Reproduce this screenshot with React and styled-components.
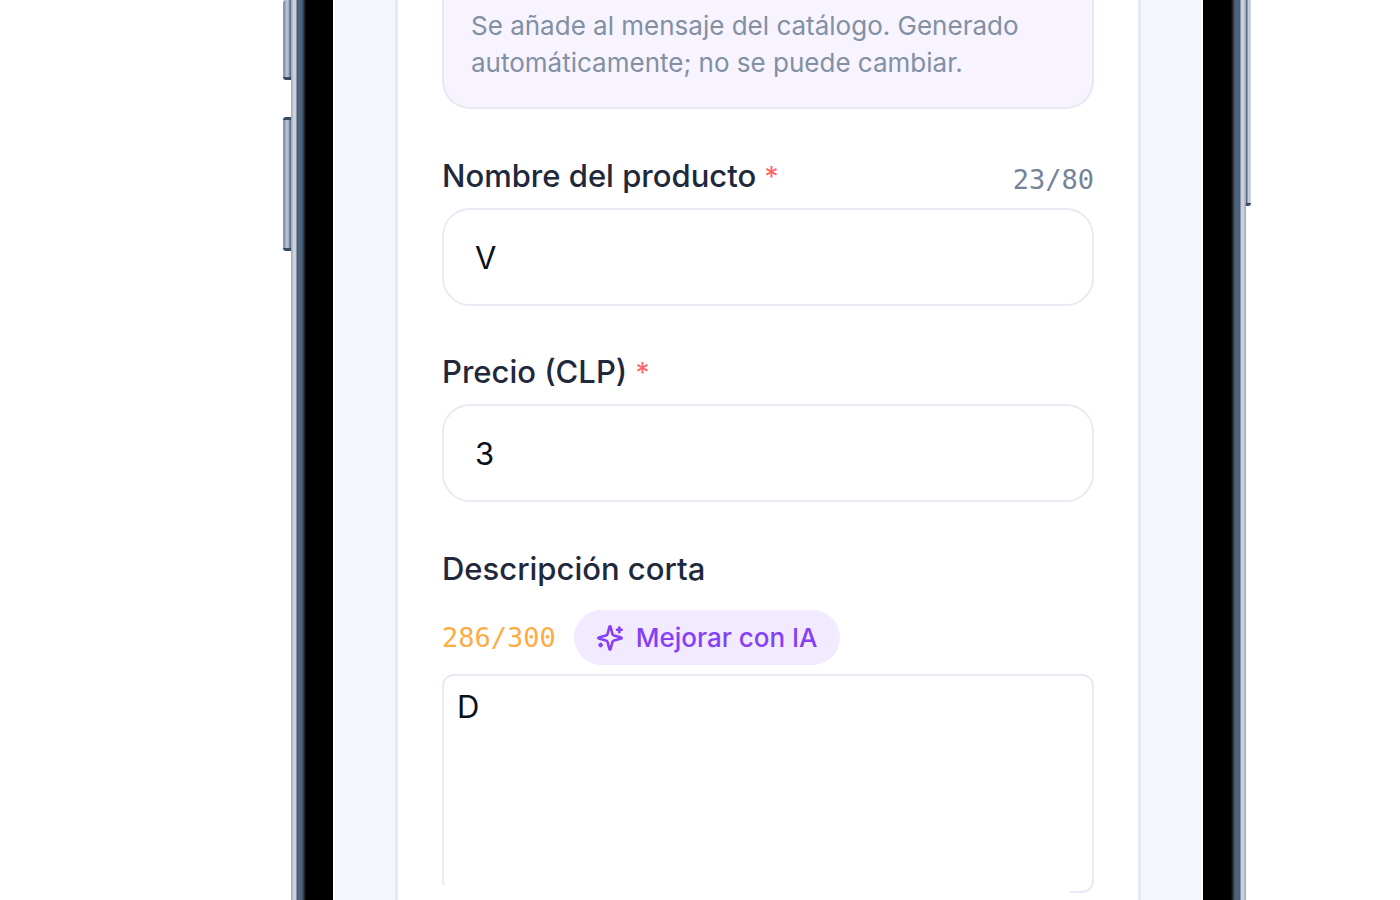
import React, { useState } from "react";
import styled, { createGlobalStyle } from "styled-components";

const GlobalStyle = createGlobalStyle`
  * {
    box-sizing: border-box;
  }

  body {
    margin: 0;
    background-color: #fff;
    font-family: Inter, "Liberation Sans", sans-serif;
  }
`;

const Sparkles = () => (
  <svg
    width="28"
    height="28"
    viewBox="0 0 24 24"
    fill="none"
    stroke="currentColor"
    strokeWidth="2.2"
    strokeLinecap="round"
    strokeLinejoin="round"
    aria-hidden="true"
  >
    <path d="M9.937 15.5A2 2 0 0 0 8.5 14.063l-6.135-1.582a.5.5 0 0 1 0-.962L8.5 9.936A2 2 0 0 0 9.937 8.5l1.582-6.135a.5.5 0 0 1 .963 0L14.063 8.5A2 2 0 0 0 15.5 9.937l6.135 1.581a.5.5 0 0 1 0 .964L15.5 14.063a2 2 0 0 0-1.437 1.437l-1.582 6.135a.5.5 0 0 1-.963 0z" />
    <path d="M20 3v4" />
    <path d="M22 5h-4" />
    <path d="M4 17v2" />
    <path d="M5 18H3" />
  </svg>
);

const App = () => {
  const [name, setName] = useState("V");
  const [price, setPrice] = useState("3");
  const [description, setDescription] = useState("D");

  return (
    <>
      <GlobalStyle />
      <Stage>
        <Keys $side="left">
          <Key $side="left" $height={80} $cut />
          <Key $side="left" $height={134} />
        </Keys>
        <Rail $side="left" />
        <Screen>
          <Card>
            <Notice>
              Se añade al mensaje del catálogo. Generado
              <br />
              automáticamente; no se puede cambiar.
            </Notice>
            <Field>
              <LabelRow>
                <Label htmlFor="name">
                  Nombre del producto <Required>*</Required>
                </Label>
                <Counter>23/80</Counter>
              </LabelRow>
              <Input
                id="name"
                value={name}
                onChange={(e) => setName(e.target.value)}
              />
            </Field>
            <Field>
              <LabelRow>
                <Label htmlFor="price">
                  Precio (CLP) <Required>*</Required>
                </Label>
              </LabelRow>
              <Input
                id="price"
                inputMode="numeric"
                value={price}
                onChange={(e) => setPrice(e.target.value)}
              />
            </Field>
            <Field>
              <LabelRow>
                <Label htmlFor="description">Descripción corta</Label>
              </LabelRow>
              <Tools>
                <Counter $warning>286/300</Counter>
                <ImproveButton type="button">
                  <Sparkles />
                  Mejorar con IA
                </ImproveButton>
              </Tools>
              <TextBox>
                <TextArea
                  id="description"
                  value={description}
                  onChange={(e) => setDescription(e.target.value)}
                />
              </TextBox>
            </Field>
          </Card>
        </Screen>
        <Rail $side="right" />
        <Keys $side="right">
          <Key $side="right" $height={206} $cut />
        </Keys>
      </Stage>
    </>
  );
};

const Stage = styled.main`
  display: flex;
  min-height: 100vh;
  padding: 0 149px 0 283px;
`;

const Keys = styled.div`
  display: flex;
  flex-direction: column;
  gap: 37px;
  width: ${(props) => (props.$side === "left" ? "8px" : "5px")};
`;

const Key = styled.div`
  height: ${(props) => props.$height}px;
  border: solid #3a4a61;
  border-width: ${(props) => (props.$cut ? "0 0 3px" : "3px 0")};
  border-radius: ${(props) =>
    props.$side === "left" ? "3px 0 0 3px" : "0 0 3px 0"};
  background: ${(props) =>
    props.$side === "left"
      ? "linear-gradient(to right, #8996ab 0 2px, #b4bfd3 3px 5px, #62738b 7px 8px)"
      : "linear-gradient(to right, #586b84 0 1px, #c3c9d8 2px 4px, #dde0e8 5px)"};
`;

const Rail = styled.div`
  flex: none;
  width: ${(props) => (props.$side === "left" ? "42px" : "43px")};
  background: linear-gradient(
    to ${(props) => (props.$side === "left" ? "right" : "left")},
    #a2a9b7 0 1px,
    #ccd0dc 2px 5px,
    #45586f 6px,
    #4c637c 7px 11px,
    #2b3138 13px,
    #000 15px
  );
`;

const Screen = styled.div`
  flex: 1;
  display: flex;
  padding: 0 60px;
  border: solid #fff;
  border-width: 0 2px;
  background-color: #f3f6fa;
`;

const Card = styled.form`
  flex: 1;
  display: flex;
  flex-direction: column;
  gap: 49px;
  padding: 0 44px;
  border: solid #e6eaf2;
  border-width: 0 3px;
  background-color: #fff;
`;

const Notice = styled.p`
  margin: 0;
  padding: 7px 27px 26px;
  border: 2px solid #e5e9f2;
  border-top: none;
  border-radius: 0 0 28px 28px;
  background-color: #f7f3ff;
  color: #8290a4;
  font-size: 26px;
  line-height: 37px;
`;

const Field = styled.div`
  display: flex;
  flex-direction: column;
`;

const LabelRow = styled.div`
  display: flex;
  align-items: flex-end;
  justify-content: space-between;
  height: 38px;
`;

const Label = styled.label`
  color: #1e293b;
  font-size: 31px;
  font-weight: 500;
  line-height: 38px;
`;

const Required = styled.span`
  color: #ff6467;
  font-size: 28px;
  font-weight: 400;
`;

const Counter = styled.span`
  color: ${(props) => (props.$warning ? "#fdac44" : "#75839a")};
  font-family: "DejaVu Sans Mono", "Liberation Mono", monospace;
  font-size: 27px;
  line-height: 32px;
`;

const Input = styled.input`
  width: 100%;
  height: 98px;
  margin-top: 12px;
  margin-bottom: -1px;
  padding: 0 31px;
  border: 2px solid #e8ebf4;
  border-radius: 28px;
  outline: none;
  background-color: #fff;
  color: #0b0f16;
  font-family: inherit;
  font-size: 31px;
`;

const Tools = styled.div`
  display: flex;
  align-items: center;
  gap: 18px;
  margin-top: 22px;
`;

const ImproveButton = styled.button`
  display: flex;
  align-items: center;
  gap: 12px;
  height: 55px;
  padding: 0 22px;
  border: none;
  border-radius: 28px;
  background-color: #f2eafe;
  color: #8640f5;
  font-family: inherit;
  font-size: 26px;
  font-weight: 500;
  cursor: pointer;
`;

const TextBox = styled.div`
  position: relative;
  margin-top: 9px;

  &::after {
    content: "";
    position: absolute;
    right: 24px;
    bottom: 0;
    left: 0;
    height: 8px;
    background-color: #fff;
  }
`;

const TextArea = styled.textarea`
  display: block;
  width: 100%;
  height: 219px;
  padding: 12px 13px;
  border: 2px solid #e8ebf4;
  border-radius: 12px;
  outline: none;
  resize: none;
  color: #0b0f16;
  font-family: inherit;
  font-size: 31px;
  line-height: 38px;
`;

export default App;
